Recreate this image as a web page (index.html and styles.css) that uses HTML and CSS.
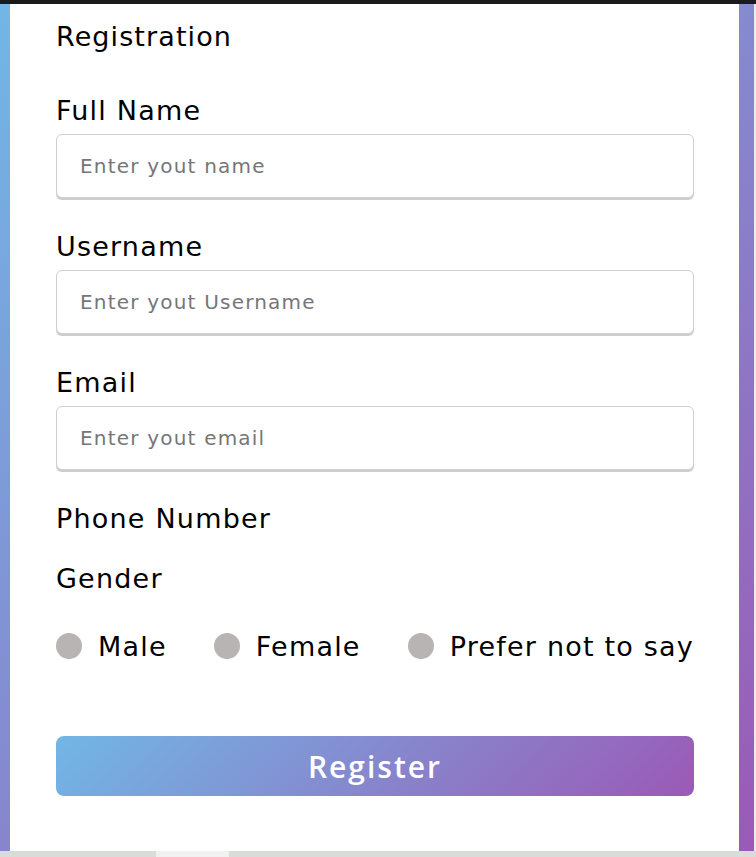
FILE: index.html
```html
<!DOCTYPE html>
<html>
<head>
<meta charset="utf-8">
<link rel="stylesheet" href="styles.css">
</head>
<body>
<div class="topbar"></div>
<div class="page">
  <div class="card">
    <div class="title">Registration</div>
    <div class="field">
      <label class="label">Full Name</label>
      <input class="input" type="text" placeholder="Enter yout name">
    </div>
    <div class="field">
      <label class="label">Username</label>
      <input class="input" type="text" placeholder="Enter yout Username">
    </div>
    <div class="field">
      <label class="label">Email</label>
      <input class="input" type="text" placeholder="Enter yout email">
    </div>
    <div class="label phone">Phone Number</div>
    <div class="label gender">Gender</div>
    <div class="radios">
      <div class="radio"><span class="dot"></span><span class="rtext">Male</span></div>
      <div class="radio"><span class="dot"></span><span class="rtext">Female</span></div>
      <div class="radio"><span class="dot"></span><span class="rtext">Prefer not to say</span></div>
    </div>
    <button class="btn">Register</button>
  </div>
  <div class="vscroll"></div>
</div>
<div class="hscroll"><div class="thumb"></div></div>
</body>
</html>
```

FILE: styles.css
```css
* { box-sizing: border-box; }
html, body { margin: 0; padding: 0; }
body {
  width: 756px;
  height: 857px;
  overflow: hidden;
  font-family: "DejaVu Sans", "Noto Sans", sans-serif;
  color: #000;
  background: #fff;
}
.topbar { height: 4px; background: #1b1b1b; }
.page {
  height: 847px;
  display: flex;
  padding-left: 10px;
  background: linear-gradient(135deg, #71b7e6, #9b59b6);
}
.card {
  width: 729px;
  background: #fff;
  padding: 15px 45px 0 46px;
}
.vscroll { margin-left: auto; width: 2px; background: #ececec; }
.title { font-size: 27px; line-height: 36px; letter-spacing: 1.1px; margin-bottom: 38px; }
.label { display: block; font-size: 27px; line-height: 36px; letter-spacing: 1.2px; }
.field { margin-bottom: 31px; }
.field .label { margin-bottom: 5px; }
.input {
  display: block;
  width: 638px;
  height: 64px;
  border: 1px solid #cfcfcf;
  border-radius: 6px;
  box-shadow: 0 2px 0 #cdcdcd;
  padding: 0 23px;
  font-family: inherit;
  font-size: 20px;
  letter-spacing: 1.2px;
  outline: none;
}
.input::placeholder { color: #767676; }
.gender { margin-top: 24px; }
.radios {
  margin-top: 30px;
  display: flex;
  justify-content: space-between;
  font-size: 27px;
  line-height: 36px;
  letter-spacing: 1.2px;
}
.radio { display: flex; align-items: center; gap: 16px; }
.rtext { padding-top: 2px; }
.dot { width: 26px; height: 26px; border-radius: 50%; background: #b8b4b4; }
.btn {
  display: block;
  margin-top: 71px;
  width: 638px;
  height: 60px;
  border: none;
  border-radius: 8px;
  background: linear-gradient(135deg, #71b7e6, #9b59b6);
  color: #fff;
  font-family: "Open Sans", "DejaVu Sans", sans-serif;
  font-size: 30px;
  font-weight: 600;
  letter-spacing: 2px;
  padding: 0;
}
.hscroll { height: 6px; background: #dadcda; }
.thumb { margin-left: 156px; width: 73px; height: 6px; background: #f1f1f1; }
```
